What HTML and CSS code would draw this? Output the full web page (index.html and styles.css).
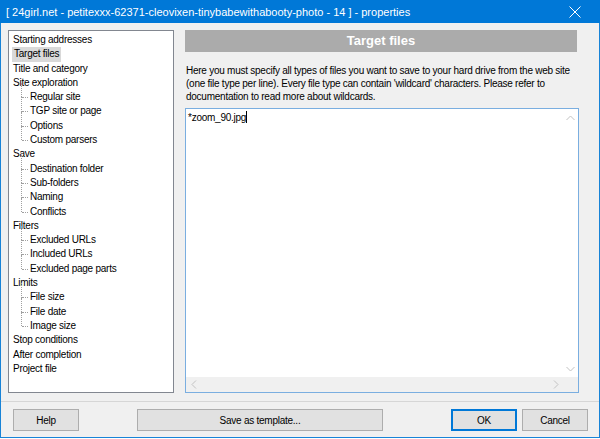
FILE: index.html
```html
<!DOCTYPE html>
<html>
<head lang="en">
    <meta charset="UTF-8">
    <title>properties</title>
    <link rel="stylesheet" href="styles.css">
</head>
<body>
<div class="window">
    <div class="titlebar">
        <span class="title">[ 24girl.net - petitexxx-62371-cleovixen-tinybabewithabooty-photo - 14 ] - properties</span>
        <svg class="close" width="12" height="12" viewBox="0 0 12 12"><path d="M0.5 0.5 L11.5 11.5 M11.5 0.5 L0.5 11.5" stroke="#fff" stroke-width="1"/></svg>
    </div>
    <div class="main">
        <div class="tree">
            <div class="item">Starting addresses</div>
            <div class="item"><span class="sel">Target files</span></div>
            <div class="item">Title and category</div>
            <div class="item">Site exploration</div>
            <div class="group">
                <div class="child">Regular site</div>
                <div class="child">TGP site or page</div>
                <div class="child">Options</div>
                <div class="child last">Custom parsers</div>
            </div>
            <div class="item">Save</div>
            <div class="group">
                <div class="child">Destination folder</div>
                <div class="child">Sub-folders</div>
                <div class="child">Naming</div>
                <div class="child last">Conflicts</div>
            </div>
            <div class="item">Filters</div>
            <div class="group">
                <div class="child">Excluded URLs</div>
                <div class="child">Included URLs</div>
                <div class="child last">Excluded page parts</div>
            </div>
            <div class="item">Limits</div>
            <div class="group">
                <div class="child">File size</div>
                <div class="child">File date</div>
                <div class="child last">Image size</div>
            </div>
            <div class="item">Stop conditions</div>
            <div class="item">After completion</div>
            <div class="item">Project file</div>
        </div>
        <div class="pane">
            <div class="header">Target files</div>
            <p class="desc">Here you must specify all types of files you want to save to your hard drive from the web site (one file type per line). Every file type can contain 'wildcard' characters. Please refer to documentation to read more about wildcards.</p>
            <div class="editor">
                <div class="text">*zoom_90.jpg<span class="caret"></span></div>
                <div class="vscroll">
                    <svg width="9" height="6" viewBox="0 0 9 6"><path d="M0.5 5 L4.5 1 L8.5 5" fill="none" stroke="#c2c2c2"/></svg>
                    <svg width="9" height="6" viewBox="0 0 9 6"><path d="M0.5 1 L4.5 5 L8.5 1" fill="none" stroke="#c2c2c2"/></svg>
                </div>
                <div class="hscroll">
                    <svg width="6" height="9" viewBox="0 0 6 9"><path d="M5 0.5 L1 4.5 L5 8.5" fill="none" stroke="#c2c2c2"/></svg>
                    <svg width="6" height="9" viewBox="0 0 6 9"><path d="M1 0.5 L5 4.5 L1 8.5" fill="none" stroke="#c2c2c2"/></svg>
                </div>
                <div class="corner"></div>
            </div>
        </div>
    </div>
    <div class="footer">
        <button class="btn help">Help</button>
        <button class="btn template">Save as template...</button>
        <button class="btn ok">OK</button>
        <button class="btn cancel">Cancel</button>
    </div>
</div>
</body>
</html>
```
FILE: styles.css
```css
body{
    margin: 0;
    background: #fff;
    font-family: "Liberation Sans", Arial, sans-serif;
    font-size: 10px;
    letter-spacing: -0.25px;
    color: #000;
}
.window{
    width: 598px;
    height: 437px;
    border: 1px solid #1883d7;
    border-top: none;
    background: #f0f0f0;
    display: flex;
    flex-direction: column;
}
.titlebar{
    height: 23px;
    margin: 0 -1px;
    background: #0078d7;
    color: #fff;
    display: flex;
    align-items: center;
    padding: 0 19px 0 6px;
    font-size: 11px;
    letter-spacing: 0;
}
.title{
    flex: 1;
}
.main{
    display: flex;
    padding: 7px 0 0 7px;
    height: 363px;
}
.tree{
    width: 164px;
    border: 1px solid #828790;
    background: #fff;
    padding-top: 2px;
}
.item, .child{
    height: 14.3px;
    line-height: 14.3px;
    padding-left: 4px;
    white-space: nowrap;
}
.sel{
    background: #d9d9d9;
    display: inline-block;
    padding: 0 2px;
    margin-left: -1px;
}
.group{
    margin-left: 12px;
}
.child{
    position: relative;
    padding-left: 9px;
}
.child::before{
    content: "";
    position: absolute;
    left: 0;
    top: -7px;
    height: 14.3px;
    border-left: 1px dotted #a0a0a0;
}
.child::after{
    content: "";
    position: absolute;
    left: 1px;
    top: 7px;
    width: 6px;
    border-top: 1px dotted #a0a0a0;
}
.child.last::before{
    height: 14px;
}
.pane{
    margin-left: 11px;
    width: 394px;
    display: flex;
    flex-direction: column;
}
.header{
    width: 392px;
    height: 22px;
    line-height: 22px;
    background: #ababab;
    color: #fff;
    font-weight: bold;
    font-size: 13px;
    letter-spacing: 0;
    text-align: center;
}
.desc{
    margin: 12px 0 0 1px;
    line-height: 13px;
    height: 44px;
}
.editor{
    flex: 1;
    border: 1px solid #7aaee0;
    background: #fff;
    display: grid;
    grid-template-columns: 1fr 15px;
    grid-template-rows: 1fr 15px;
}
.text{
    padding: 2px 2px;
    line-height: 13px;
}
.caret{
    display: inline-block;
    width: 1px;
    height: 12px;
    background: #000;
    vertical-align: -2px;
}
.vscroll{
    display: flex;
    flex-direction: column;
    justify-content: space-between;
    align-items: center;
    padding: 6px 0 5px;
}
.hscroll{
    background: #f0f0f0;
    display: flex;
    justify-content: space-between;
    align-items: center;
    padding: 0 4px 0 5px;
}
.corner{
    background: #f0f0f0;
}
.footer{
    margin-top: 8px;
    border-top: 1px solid #d6d6d6;
    padding: 7px 0 0 12px;
    display: flex;
}
.btn{
    height: 22px;
    background: #e1e1e1;
    border: 1px solid #adadad;
    font-family: "Liberation Sans", Arial, sans-serif;
    font-size: 10px;
    letter-spacing: -0.25px;
    color: #000;
    padding: 0;
}
.help{
    width: 66px;
}
.template{
    width: 246px;
    margin-left: 58px;
}
.ok{
    width: 66px;
    margin-left: 68px;
    border: 2px solid #0078d7;
}
.cancel{
    width: 66px;
    margin-left: 5px;
}
```
